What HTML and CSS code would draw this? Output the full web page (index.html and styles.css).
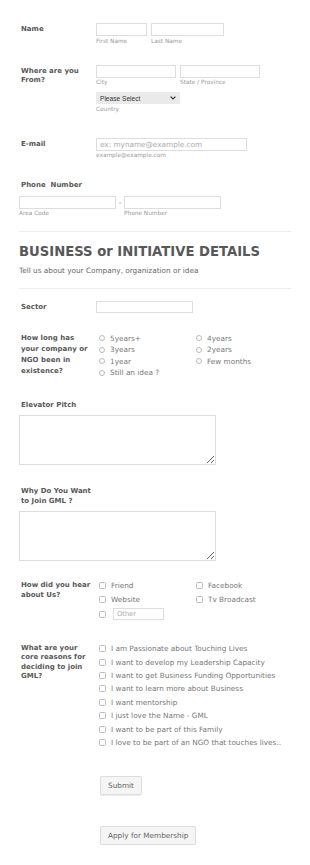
FILE: index.html
```html
<!DOCTYPE html>
<html lang="en">
<head>
    <meta charset="UTF-8">
    <meta name="viewport" content="width=device-width, initial-scale=1.0">
    <title>GML Membership Form</title>
    <link rel="stylesheet" href="styles.css">
</head>
<body>
    <form class="form" id="gmlForm">
        <div class="row">
            <label class="label">Name</label>
            <div class="field inline">
                <div class="sub-wrap">
                    <input type="text" class="input w-first">
                    <span class="sub">First Name</span>
                </div>
                <div class="sub-wrap">
                    <input type="text" class="input w-last">
                    <span class="sub">Last Name</span>
                </div>
            </div>
        </div>

        <div class="row">
            <label class="label">Where are you<br>From?</label>
            <div class="field">
                <div class="inline">
                    <div class="sub-wrap">
                        <input type="text" class="input w-city">
                        <span class="sub">City</span>
                    </div>
                    <div class="sub-wrap">
                        <input type="text" class="input w-city">
                        <span class="sub">State / Province</span>
                    </div>
                </div>
                <div class="sub-wrap country">
                    <div class="select-box">
                        <select class="select">
                            <option>Please Select</option>
                            <option>Nigeria</option>
                            <option>Ghana</option>
                            <option>Other</option>
                        </select>
                        <svg class="chevron" width="6" height="4" viewBox="0 0 6 4">
                            <path d="M0.6 0.6 L3 3 L5.4 0.6" fill="none" stroke="#333" stroke-width="1.2"/>
                        </svg>
                    </div>
                    <span class="sub">Country</span>
                </div>
            </div>
        </div>

        <div class="row row-email">
            <label class="label">E-mail</label>
            <div class="field">
                <div class="sub-wrap">
                    <input type="email" class="input w-email" placeholder="ex: myname@example.com">
                    <span class="sub">example@example.com</span>
                </div>
            </div>
        </div>

        <div class="row stacked">
            <label class="label">Phone&nbsp;&nbsp;Number</label>
            <div class="inline phone">
                <div class="sub-wrap">
                    <input type="text" class="input w-phone">
                    <span class="sub">Area Code</span>
                </div>
                <span class="dash">-</span>
                <div class="sub-wrap">
                    <input type="text" class="input w-phone">
                    <span class="sub">Phone Number</span>
                </div>
            </div>
        </div>

        <div class="section">
            <h2>BUSINESS or INITIATIVE DETAILS</h2>
            <p>Tell us about your Company, organization or idea</p>
        </div>

        <div class="row row-sector">
            <label class="label">Sector</label>
            <div class="field">
                <input type="text" class="input w-sector">
            </div>
        </div>

        <div class="row">
            <label class="label label-tall">How long has<br>your company or<br>NGO been in<br>existence?</label>
            <div class="field options radios">
                <label class="option"><input type="radio" name="age"> 5years+</label>
                <label class="option"><input type="radio" name="age"> 4years</label>
                <label class="option"><input type="radio" name="age"> 3years</label>
                <label class="option"><input type="radio" name="age"> 2years</label>
                <label class="option"><input type="radio" name="age"> 1year</label>
                <label class="option"><input type="radio" name="age"> Few months</label>
                <label class="option"><input type="radio" name="age"> Still an idea ?</label>
            </div>
        </div>

        <div class="row stacked">
            <label class="label">Elevator Pitch</label>
            <textarea class="textarea"></textarea>
        </div>

        <div class="row stacked">
            <label class="label">Why Do You Want<br>to Join GML ?</label>
            <textarea class="textarea"></textarea>
        </div>

        <div class="row row-hear">
            <label class="label">How did you hear<br>about Us?</label>
            <div class="field options checks">
                <label class="option"><input type="checkbox"> Friend</label>
                <label class="option"><input type="checkbox"> Facebook</label>
                <label class="option"><input type="checkbox"> Website</label>
                <label class="option"><input type="checkbox"> Tv Broadcast</label>
                <label class="option other"><input type="checkbox"> <input type="text" class="input w-other" placeholder="Other"></label>
            </div>
        </div>

        <div class="row">
            <label class="label label-core">What are your<br>core reasons for<br>deciding to join<br>GML?</label>
            <div class="field options reasons">
                <label class="option"><input type="checkbox"> I am Passionate about Touching Lives</label>
                <label class="option"><input type="checkbox"> I want to develop my Leadership Capacity</label>
                <label class="option"><input type="checkbox"> I want to get Business Funding Opportunities</label>
                <label class="option"><input type="checkbox"> I want to learn more about Business</label>
                <label class="option"><input type="checkbox"> I want mentorship</label>
                <label class="option"><input type="checkbox"> I just love the Name - GML</label>
                <label class="option"><input type="checkbox"> I want to be part of this Family</label>
                <label class="option"><input type="checkbox"> I love to be part of an NGO that touches lives..</label>
            </div>
        </div>

        <div class="buttons">
            <button type="submit" class="btn">Submit</button>
            <button type="button" class="btn">Apply for Membership</button>
        </div>
    </form>
</body>
</html>
```

FILE: styles.css
```css
* {
    box-sizing: border-box;
}
body {
    font-family: 'DejaVu Sans', Verdana, sans-serif;
    font-size: 7.3px;
    background-color: #fff;
    color: #555;
    margin: 0;
    padding: 0;
}
.form {
    width: 310px;
    padding: 13px 19px 0;
}
.row {
    display: flex;
    padding: 10px 0;
}
.row.stacked {
    flex-direction: column;
}
.row-email {
    padding-top: 15px;
}
.row-sector {
    padding-top: 12px;
}
.row-hear {
    padding-top: 8px;
}
.label {
    width: 77px;
    flex: none;
    padding: 2px 0 0 2px;
    font-size: 7px;
    font-weight: bold;
    line-height: 9.5px;
    color: #585858;
    white-space: nowrap;
}
.label-tall {
    padding-top: 0;
    line-height: 11px;
}
.label-core {
    line-height: 9.3px;
}
.stacked .label {
    width: auto;
}
.stacked .label + * {
    margin-top: 5px;
}
.inline {
    display: flex;
    gap: 3px;
}
.inline .sub-wrap + .sub-wrap {
    margin-left: 1px;
}
.sub-wrap {
    display: flex;
    flex-direction: column;
}
.sub {
    margin-top: 1.5px;
    font-size: 5.8px;
    line-height: 7px;
    color: #9a9a9a;
}
.input {
    height: 13px;
    border: 1px solid #ddd;
    background: #fff;
    padding: 0 3px;
    font-family: inherit;
    font-size: 7.3px;
    color: #555;
    outline: none;
}
.input::placeholder {
    color: #aaa;
}
.w-first { width: 51px; }
.w-last { width: 73px; }
.w-city { width: 80px; }
.w-email { width: 151px; }
.w-phone { width: 97px; }
.w-sector { width: 97px; height: 12px; }
.w-other { width: 51px; height: 12px; font-size: 6.7px; margin-left: 2px; }
.country {
    margin-top: 6px;
}
.select-box {
    position: relative;
    width: 84px;
    height: 12px;
}
.select {
    appearance: none;
    width: 100%;
    height: 12px;
    border: none;
    border-radius: 1px;
    background-color: #eaeaea;
    padding: 0 4px;
    font-family: 'Liberation Sans', Arial, sans-serif;
    font-size: 6.6px;
    color: #333;
}
.chevron {
    position: absolute;
    right: 4px;
    top: 4px;
    pointer-events: none;
}
.phone {
    gap: 0;
}
.dash {
    width: 8px;
    text-align: center;
    line-height: 13px;
    color: #777;
}
.section {
    margin-top: 4px;
    border-top: 1px solid #eee;
    border-bottom: 1px solid #eee;
}
h2 {
    margin: 12px 0 0;
    font-size: 13.2px;
    line-height: 16px;
    font-weight: bold;
    color: #585858;
}
.section p {
    margin: 6px 0 12px;
    line-height: 9.5px;
    color: #666;
}
.options {
    display: grid;
    grid-template-columns: 97px 97px;
    color: #777;
}
.option {
    display: flex;
    align-items: center;
    height: 11.5px;
    white-space: nowrap;
}
.checks .option {
    height: 13px;
    margin-bottom: 1px;
}
.checks .other {
    height: 14px;
}
.reasons {
    grid-template-columns: 1fr;
}
.reasons .option {
    height: 13.4px;
}
.option input[type="radio"],
.option input[type="checkbox"] {
    appearance: none;
    flex: none;
    width: 6px;
    height: 6px;
    margin: 0 5px 0 3px;
    border: 1px solid #bbb;
    background: #fff;
}
.option input[type="radio"] {
    border-radius: 50%;
}
.option input[type="checkbox"] {
    width: 7px;
    height: 7px;
    border-radius: 1.5px;
}
.textarea {
    width: 197px;
    height: 50px;
    border: 1px solid #ddd;
    font-family: inherit;
}
.buttons {
    display: flex;
    flex-direction: column;
    align-items: flex-start;
    gap: 31px;
    padding: 17px 0 0 81px;
}
.btn {
    height: 19px;
    padding: 0 7px;
    background-color: #f5f5f5;
    border: 1px solid #ddd;
    border-radius: 2px;
    box-shadow: 0 1px 1px rgba(0, 0, 0, 0.08);
    font-family: inherit;
    font-size: 7.3px;
    color: #666;
    cursor: pointer;
}
```
